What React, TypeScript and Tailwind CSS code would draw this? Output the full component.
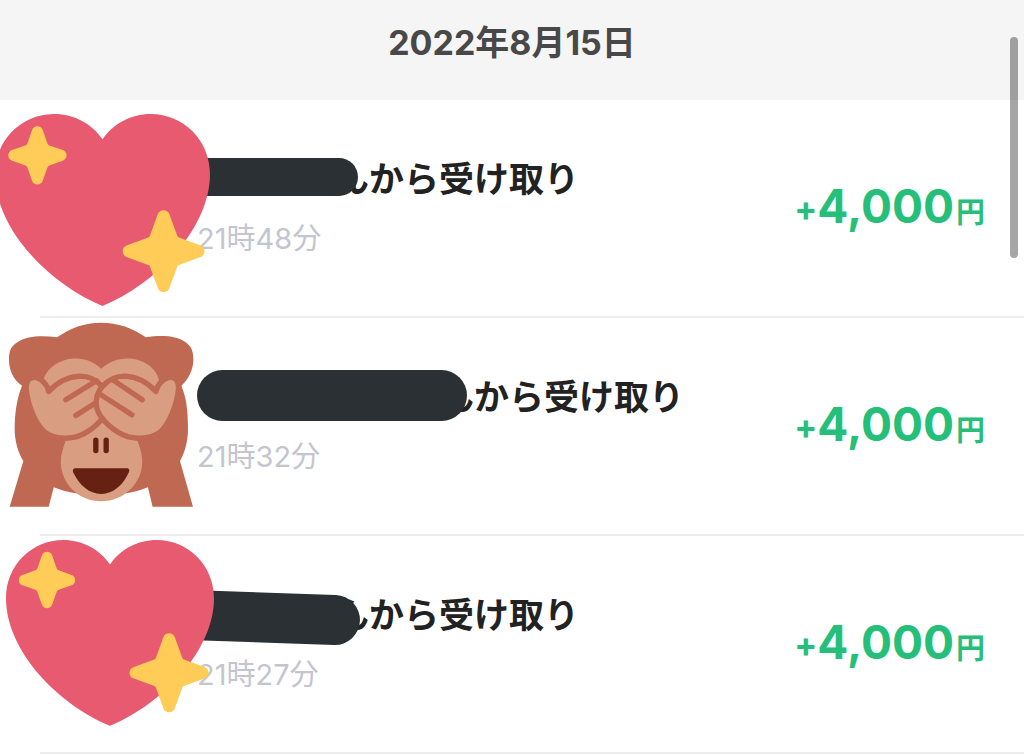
import React from 'react';

type StickerKind = 'heart' | 'monkey';

type Transfer = {
    id: string;
    time: string;
    amount: string;
    sticker: StickerKind;
    stickerClass: string;
    maskClass: string;
};

const TRANSFERS: Transfer[] = [
    {
        id: '2148',
        time: '21時48分',
        amount: '4,000',
        sticker: 'heart',
        stickerClass: 'top-[14px] -left-[45px] w-[215px]',
        maskClass: 'w-[161px] h-[38px] -mr-[24px] mb-1 rounded-r-full',
    },
    {
        id: '2132',
        time: '21時32分',
        amount: '4,000',
        sticker: 'monkey',
        stickerClass: 'top-1 -left-[31px] w-[185px]',
        maskClass: 'w-[270px] h-[51px] -mr-[28px] mb-1 rounded-full',
    },
    {
        id: '2127',
        time: '21時27分',
        amount: '4,000',
        sticker: 'heart',
        stickerClass: 'top-1 -left-[34px] w-[208px]',
        maskClass: 'w-[163px] h-[50px] -mr-[26px] mt-1.5 rotate-2 rounded-r-full',
    },
];

function HeartSticker({ className }: { className: string }) {
    return (
        <svg viewBox="-14 42 644 575" className={className} aria-hidden="true">
            <path
                fill="#e75a70"
                d="M308 118C340 70 395 42 452 42C552 42 630 122 630 222C630 385 470 550 308 617C146 550 -14 385 -14 222C-14 122 64 42 164 42C221 42 276 70 308 118Z"
            />
            <g fill="#ffcc57">
                <path d="M97 90C102 75 124 75 129 90L143 130Q145 134 149 136L189 150C204 155 204 177 189 182L149 196Q145 198 143 202L129 242C124 257 102 257 97 242L83 202Q81 198 77 196L37 182C22 177 22 155 37 150L77 136Q81 134 83 130Z" />
                <path d="M473 344C478 326 504 326 509 344L532 407Q533 411 537 412L600 435C618 440 618 466 600 471L537 494Q533 495 532 499L509 562C504 580 478 580 473 562L450 499Q449 495 445 494L382 471C364 466 364 440 382 435L445 412Q449 411 450 407Z" />
            </g>
        </svg>
    );
}

function MonkeySticker({ className }: { className: string }) {
    const hand =
        'M308 215C325 195 345 184 375 184C415 186 445 205 468 230C470 215 485 193 507 188C528 186 536 200 536 220C531 270 510 325 480 352C455 372 415 372 385 366C345 352 300 315 291 280C285 255 293 230 308 215Z';

    return (
        <svg viewBox="28 22 554 556" className={className} aria-hidden="true">
            <path
                fill="#bf6952"
                d="M172 68C210 40 255 24 304 24C353 24 400 40 438 68C490 60 530 65 556 82C575 95 580 110 580 135C580 165 565 195 544 213C560 250 564 290 564 345C564 375 555 415 540 438L579 575H458L444 517C400 535 360 540 304 540C248 540 206 535 162 517L147 575H30L71 438C55 415 45 375 45 345C45 300 50 255 67 213C40 195 28 165 28 135C28 105 35 95 54 82C85 62 130 62 172 68Z"
            />
            <g fill="#d99e82">
                <path d="M304 162C325 142 352 131 383 131C430 131 470 160 478 198L468 230L304 300L148 232L132 192C145 155 185 131 228 131C258 131 285 142 304 162Z" />
                <path d="M304 318C260 355 225 375 198 377C190 400 183 420 183 440C183 505 235 559 304 559C373 559 427 505 427 440C427 420 420 395 412 377C380 375 345 355 304 318Z" />
                <g stroke="#bf6952" strokeWidth="16" strokeLinecap="round" strokeLinejoin="round">
                    <path d={hand} transform="translate(615 0) scale(-1 1)" />
                    <path d="M198 255L290 198M228 302L300 256" />
                    <path d={hand} />
                    <path d="M340 196L427 255M300 238L396 300" />
                </g>
            </g>
            <g fill="#662113">
                <rect x="280" y="368" width="16" height="47" rx="8" />
                <rect x="311" y="368" width="16" height="47" rx="8" />
                <path d="M228 460H380C388 460 390 466 387 472C370 510 340 537 304 537C268 537 238 510 220 472C218 466 220 460 228 460Z" />
            </g>
        </svg>
    );
}

function TransferRow({ transfer }: { transfer: Transfer }) {
    const Sticker = transfer.sticker === 'heart' ? HeartSticker : MonkeySticker;

    return (
        <li className="relative ml-10 flex items-center justify-between border-b-2 border-[#ededee] pt-[53px] pr-[39px] pb-[57px] pl-[157px]">
            <div>
                <div className="flex h-[52px] items-center whitespace-nowrap text-[35px] font-semibold text-[#222222]">
                    {/* hidden sender name */}
                    <span className={`relative z-10 shrink-0 bg-[#2b3034] ${transfer.maskClass}`} />
                    <span>んから受け取り</span>
                </div>
                <p className="mt-3.5 text-[29px] leading-10 text-[#c3c5cf]">{transfer.time}</p>
            </div>

            <p className="flex items-baseline whitespace-nowrap pt-1.5 font-bold text-[#25bf7a]">
                <span className="self-center text-[34px] leading-[52px]">+</span>
                <span className="text-[46px] leading-[52px]">{transfer.amount}</span>
                <span className="ml-0.5 text-[29px] leading-[52px] font-semibold">円</span>
            </p>

            {/* sticker covers the avatar */}
            <Sticker className={`absolute z-20 ${transfer.stickerClass}`} />
        </li>
    );
}

export default function App() {
    return (
        <main className="relative min-h-screen overflow-hidden bg-white font-['Inter','Noto_Sans_CJK_JP',sans-serif]">
            <h1 className="bg-[#f5f5f5] pt-[17px] pb-[31px] text-center text-[34px] leading-[52px] font-bold text-[#484848]">
                2022年8月15日
            </h1>

            <ul>
                {TRANSFERS.map((transfer) => (
                    <TransferRow key={transfer.id} transfer={transfer} />
                ))}
            </ul>

            {/* Scroll indicator */}
            <div className="absolute top-[37px] right-1.5 z-30 h-[221px] w-2 rounded-full bg-black/35" />
        </main>
    );
}
